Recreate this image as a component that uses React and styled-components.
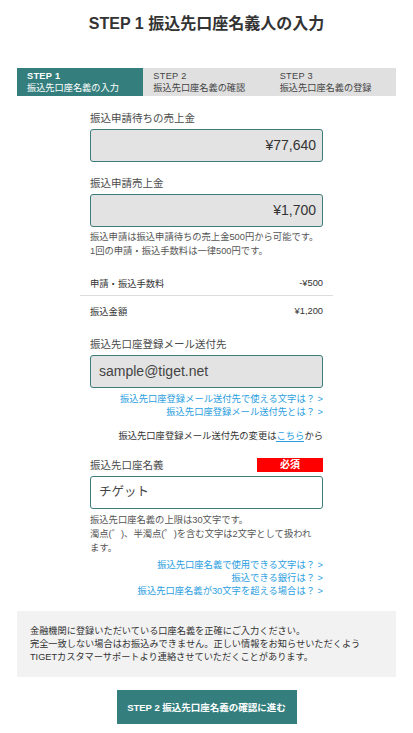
import React from 'react';
import styled, { createGlobalStyle } from 'styled-components';

const GlobalStyle = createGlobalStyle`
  body {
    margin: 0;
    background: #fff;
    font-family: "Liberation Sans", "Noto Sans CJK JP", sans-serif;
    color: #333;
  }
`;

const steps = [
  { step: 'STEP 1', label: '振込先口座名義の入力', active: true },
  { step: 'STEP 2', label: '振込先口座名義の確認' },
  { step: 'STEP 3', label: '振込先口座名義の登録' },
];

export default function App() {
  return (
    <>
      <GlobalStyle />
      <Page>
        <Title>STEP 1 振込先口座名義人の入力</Title>
        <Steps>
          {steps.map((s) => (
            <Step key={s.step} $active={s.active}>
              <span className="num">{s.step}</span>
              <span>{s.label}</span>
            </Step>
          ))}
        </Steps>

        <Column>
          <Field $top={15}>
            <Label>振込申請待ちの売上金</Label>
            <AmountBox>¥77,640</AmountBox>
          </Field>
          <Field $top={14}>
            <Label>振込申請売上金</Label>
            <AmountBox>¥1,700</AmountBox>
            <Note $top={3}>
              振込申請は振込申請待ちの売上金500円から可能です。
              <br />
              1回の申請・振込手数料は一律500円です。
            </Note>
          </Field>
        </Column>

        <FeeTable>
          <FeeRow $border>
            <span>申請・振込手数料</span>
            <span>-¥500</span>
          </FeeRow>
          <FeeRow>
            <span>振込金額</span>
            <span>¥1,200</span>
          </FeeRow>
        </FeeTable>

        <Column>
          <Field $top={11}>
            <Label>振込先口座登録メール送付先</Label>
            <TextBox $readonly>sample@tiget.net</TextBox>
            <Links $top={5}>
              <a>振込先口座登録メール送付先で使える文字は？ &gt;</a>
              <a>振込先口座登録メール送付先とは？ &gt;</a>
            </Links>
            <ChangeLine>
              振込先口座登録メール送付先の変更は<a>こちら</a>から
            </ChangeLine>
          </Field>
          <Field $top={15}>
            <LabelRow>
              <Label>振込先口座名義</Label>
              <Required>必須</Required>
            </LabelRow>
            <TextBox>チゲット</TextBox>
            <Note $top={4}>
              振込先口座名義の上限は30文字です。
              <br />
              濁点(゛)、半濁点(゜)を含む文字は2文字として扱われ
              <br />
              ます。
            </Note>
            <Links $top={4}>
              <a>振込先口座名義で使用できる文字は？ &gt;</a>
              <a>振込できる銀行は？ &gt;</a>
              <a>振込先口座名義が30文字を超える場合は？ &gt;</a>
            </Links>
          </Field>
        </Column>

        <Notice>
          金融機関に登録いただいている口座名義を正確にご入力ください。
          <br />
          完全一致しない場合はお振込みできません。正しい情報をお知らせいただくよう
          <br />
          TIGETカスタマーサポートより連絡させていただくことがあります。
        </Notice>

        <NextButton>STEP 2 振込先口座名義の確認に進む</NextButton>
      </Page>
    </>
  );
}

const Page = styled.div`
  display: flex;
  flex-direction: column;
  align-items: center;
  padding: 14px 17px 8px;
`;

const Title = styled.h1`
  margin: 0;
  font-size: 16px;
  font-weight: 700;
  color: #333;
  line-height: 20px;
`;

const Steps = styled.div`
  display: grid;
  grid-template-columns: repeat(3, 1fr);
  width: 100%;
  margin-top: 34px;
  background: #e0e0e0;
`;

const Step = styled.div`
  display: flex;
  flex-direction: column;
  justify-content: center;
  padding: 0 10px;
  height: 28px;
  box-sizing: border-box;
  font-size: 9.2px;
  line-height: 12px;
  background: ${(p) => (p.$active ? '#347f7e' : 'transparent')};
  color: ${(p) => (p.$active ? '#fff' : '#444')};
  .num {
    font-weight: ${(p) => (p.$active ? 700 : 400)};
    letter-spacing: 0.3px;
  }
`;

const Column = styled.div`
  width: 233px;
  display: flex;
  flex-direction: column;
`;

const Field = styled.div`
  display: flex;
  flex-direction: column;
  margin-top: ${(p) => p.$top}px;
`;

const Label = styled.div`
  font-size: 10.5px;
  line-height: 14px;
  color: #4a4a4a;
  margin-bottom: 4px;
`;

const LabelRow = styled.div`
  display: flex;
  justify-content: space-between;
  align-items: flex-start;
`;

const Required = styled.div`
  width: 66px;
  height: 14px;
  background: #ff0000;
  color: #fff;
  font-size: 10px;
  font-weight: 700;
  line-height: 14px;
  text-align: center;
`;

const AmountBox = styled.div`
  height: 33px;
  box-sizing: border-box;
  border: 1px solid #3d7c7a;
  border-radius: 3px;
  background: #e3e3e3;
  font-size: 14px;
  line-height: 31px;
  text-align: right;
  padding: 0 6px;
  color: #333;
`;

const TextBox = styled.div`
  height: 33px;
  box-sizing: border-box;
  border: 1px solid #3d7c7a;
  border-radius: 3px;
  background: ${(p) => (p.$readonly ? '#e3e3e3' : '#fff')};
  font-size: ${(p) => (p.$readonly ? '14px' : '12.5px')};
  font-weight: 400;
  line-height: 31px;
  padding: 0 8px;
  color: #444;
`;

const Note = styled.p`
  margin: ${(p) => p.$top}px 0 0;
  font-size: 9.3px;
  line-height: 14px;
  color: #555;
`;

const FeeTable = styled.div`
  width: 253px;
  margin-top: 12px;
`;

const FeeRow = styled.div`
  display: flex;
  justify-content: space-between;
  padding: 0 10px;
  height: ${(p) => (p.$border ? '25px' : '30px')};
  align-items: center;
  font-size: 9.3px;
  color: #333;
  border-bottom: ${(p) => (p.$border ? '1px solid #ddd' : 'none')};
`;

const Links = styled.div`
  display: flex;
  flex-direction: column;
  align-items: flex-end;
  margin-top: ${(p) => p.$top}px;
  a {
    font-size: 9.3px;
    line-height: 13px;
    color: #2b9ee0;
  }
`;

const ChangeLine = styled.div`
  margin-top: 10px;
  text-align: right;
  font-size: 9.3px;
  line-height: 14px;
  color: #333;
  a {
    color: #2b9ee0;
    border-bottom: 1px solid #2b9ee0;
  }
`;

const Notice = styled.div`
  width: 100%;
  box-sizing: border-box;
  margin-top: 13px;
  background: #f2f2f2;
  padding: 14px 13px 13px;
  font-size: 9.2px;
  line-height: 13px;
  color: #333;
`;

const NextButton = styled.button`
  margin-top: 13px;
  width: 180px;
  height: 34px;
  border: none;
  background: #347f7e;
  color: #fff;
  font-family: inherit;
  font-size: 9.5px;
  font-weight: 700;
`;
